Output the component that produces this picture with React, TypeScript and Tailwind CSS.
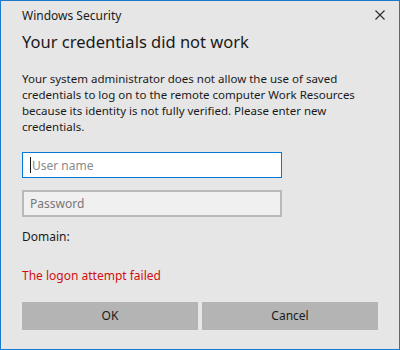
export default function App() {
  return (
    <div className="w-[400px] h-[350px] bg-[#e6e6e6] border border-[#1979ca] flex flex-col text-[#000] font-['Segoe_UI','Noto_Sans',sans-serif]">
      {/* title bar */}
      <div className="h-[29px] flex items-center justify-between pl-[21px] pr-[13px]">
        <span className="text-[12px] text-[#1a1a1a]">Windows Security</span>
        <svg width="10" height="10" viewBox="0 0 10 10" className="mr-[1px] -mt-[1px]">
          <path d="M0.5 0.5 L9.5 9.5 M9.5 0.5 L0.5 9.5" stroke="#2b2b2b" strokeWidth="1.1" fill="none" />
        </svg>
      </div>

      <div className="px-[21px] flex flex-col">
        <h1 className="text-[16.5px] leading-[26px] text-[#1a1a1a] -mt-[1px]">Your credentials did not work</h1>

        <p className="text-[11.5px] leading-[16px] text-[#1a1a1a] mt-[16px] whitespace-nowrap">
          Your system administrator does not allow the use of saved
          <br />
          credentials to log on to the remote computer Work Resources
          <br />
          because its identity is not fully verified. Please enter new
          <br />
          credentials.
        </p>

        <div className="relative mt-[17px] w-[260px] h-[26px]">
          <input
            className="block w-[260px] h-[26px] bg-white border border-[#0078d7] px-[9px] text-[12px] outline-none placeholder:text-[#8a8a8a]"
            placeholder="User name"
          />
          {/* blinking caret */}
          <span className="absolute left-[8px] top-[5px] w-px h-[16px] bg-[#1a1a1a]" />
        </div>
        <input
          className="block mt-[12px] w-[260px] h-[27px] bg-[#f0f0f0] border-2 border-[#b9b9b9] px-[6px] text-[12px] outline-none placeholder:text-[#777]"
          placeholder="Password"
          type="password"
        />

        <span className="text-[12px] text-[#1a1a1a] mt-[11px]">Domain:</span>

        <span className="text-[12px] text-[#d01010] mt-[21px]">The logon attempt failed</span>

        <div className="flex gap-[4px] mt-[17px]">
          <button className="w-[176px] h-[28px] bg-[#b4b4b4] text-[12px] text-[#1a1a1a]">OK</button>
          <button className="w-[176px] h-[28px] bg-[#b4b4b4] text-[12px] text-[#1a1a1a]">Cancel</button>
        </div>
      </div>
    </div>
  );
}
